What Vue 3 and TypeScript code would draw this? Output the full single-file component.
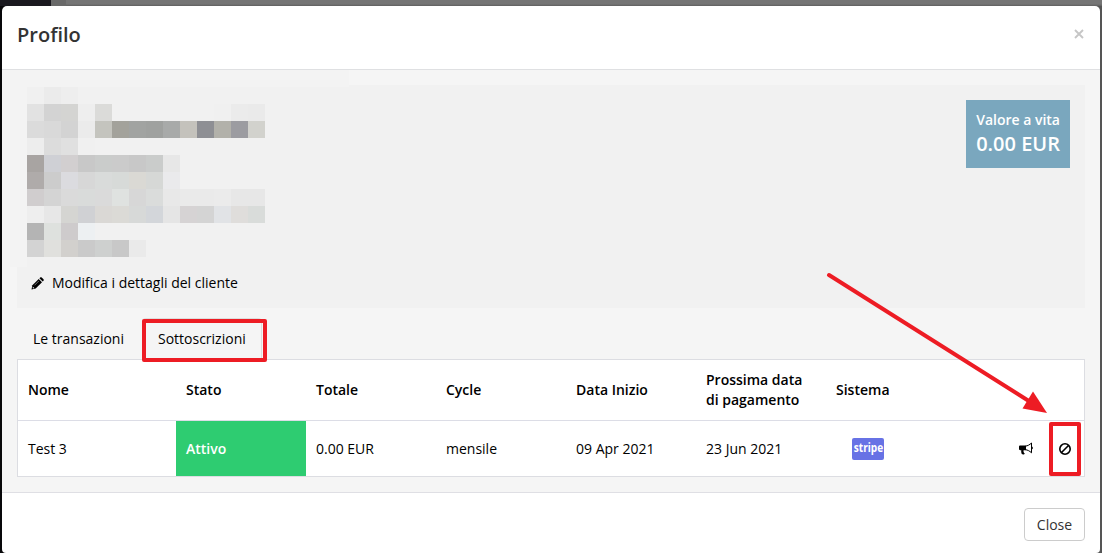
<script setup lang="ts">
import { computed, ref } from 'vue'

interface Subscription {
  name: string
  status: string
  total: string
  cycle: string
  start: string
  next: string
}

const tabs = ['Le transazioni', 'Sottoscrizioni']
const active = ref(1)

const columns = ['Nome', 'Stato', 'Totale', 'Cycle', 'Data Inizio', 'Prossima data di pagamento', 'Sistema', '']

const subscriptions: Subscription[] = [
  { name: 'Test 3', status: 'Attivo', total: '0.00 EUR', cycle: 'mensile', start: '09 Apr 2021', next: '23 Jun 2021' },
]

// pixelated customer details, one row of blocks per line, "-" is empty
const mosaic = [
  'f0f0f0 ebebeb eeeeee - - - - - - - - - - -',
  'e2e2e2 d3d3d3 d4d4d2 eeeeee dbdbd9 - - - - - - f0f0f0 ebebeb eaeaea',
  'dbdbdb d9d9d9 d3d3d3 ebebeb c4c4be a3a29b a1a3a1 9fa19f a8aaa9 c4c2bc 8e8f94 b2b1aa 9c9ca1 d2d2cd',
  'ededed dcdcdc e0e0e0 f0f0f0 - - - - - - - - - -',
  'a8a4a2 cfd0d5 d2cfd0 c8c8c8 cacccb cbcbcb c8c8c8 cacccb e7e7e7 - - - - -',
  'afabaa cccccc dbdbdf d7d7d7 d9dbda d7dad8 dad9d4 d6d8d6 eaeaec - - - - -',
  'd0cdce d4d4d4 dadada d9dbda dadada dfe2e0 d7d7d7 dadcdb e8e8e8 eaeaea eaeaea ebebeb e7e7e7 e7e7e7',
  'eeeeee e7e7e7 d5d5d2 d0d1d4 dad8d5 dbdad6 d7d9d8 d3d6da e5e5e5 d6d3d4 d4d4d4 e1e3e6 dfdddb d9dcda',
  'b4b4b4 dee1de cecbcc edf0f2 - - - - - - - - - -',
  'd3d3d3 e0e0dd d2d0cd cacaca ced0cf c8c8c8 eaeaea - - - - - - -',
]

const blocks = computed(() =>
  mosaic.flatMap(row => row.split(' ').map(c => (c === '-' ? 'transparent' : `#${c}`))),
)
</script>

<template>
  <div class="page">
    <div class="topbar">
      <span class="brand" />
      <span class="toggle" />
    </div>
    <div class="modal">
      <header class="modal-header">
        <h4>Profilo</h4>
        <button class="dismiss" aria-label="Close">
          <svg width="10" height="10" viewBox="0 0 10 10">
            <path d="M1 1l8 8M9 1l-8 8" stroke="#c6c6c6" stroke-width="1.9" />
          </svg>
        </button>
      </header>

      <main class="modal-body">
        <div class="smudge smudge-top" />
        <div class="smudge smudge-left" />
        <section class="profile">
          <div class="details">
            <div class="mosaic">
              <i v-for="(color, i) in blocks" :key="i" :style="{ background: color }" />
            </div>
            <a class="edit">
              <svg width="13" height="13" viewBox="0 0 13 13">
                <path d="M.5 12.500l.9-4.200L7.700 2l3.300 3.300-6.300 6.300z" fill="#000" />
                <path d="M8.400 1.300l.8-.8c.5-.4 1-.4 1.500 0l1.800 1.800c.4.5.4 1 0 1.500l-.8.8z" fill="#000" />
                <path d="M1.900 9.700l1.400 1.400-1.100.3-.5-.5z" fill="#f1f1f1" />
                <path d="M3.500 8.300l4.300-4.300" stroke="#999" stroke-width=".7" />
              </svg>
              <span>Modifica i dettagli del cliente</span>
            </a>
          </div>
          <div class="lifetime">
            <span>Valore a vita</span>
            <strong>0.00 EUR</strong>
          </div>
        </section>

        <nav class="tabs">
          <a v-for="(tab, i) in tabs" :key="tab" :class="{ active: i === active }" @click="active = i">{{ tab }}</a>
        </nav>

        <table>
          <colgroup>
            <col class="c-name">
            <col v-for="n in 6" :key="n" class="c-mid">
            <col>
          </colgroup>
          <thead>
            <tr>
              <th v-for="col in columns" :key="col">{{ col }}</th>
            </tr>
          </thead>
          <tbody>
            <tr v-for="sub in subscriptions" :key="sub.name">
              <td>{{ sub.name }}</td>
              <td class="status">{{ sub.status }}</td>
              <td>{{ sub.total }}</td>
              <td>{{ sub.cycle }}</td>
              <td>{{ sub.start }}</td>
              <td>{{ sub.next }}</td>
              <td><div class="stripe"><span>stripe</span></div></td>
              <td>
                <div class="actions">
                  <svg class="horn" width="14" height="14" viewBox="0 0 14 14">
                    <path d="M12.500 1v9.800c-2-1.900-4-2.900-6-3.100V4.100c2-.2 4-1.200 6-3.100z" fill="#fff" stroke="#000" stroke-width="1" />
                    <path d="M7 3.600v4.600H4.600c-.3 1.300.1 2.400 1.200 3.400-.4 1.200-2.200 1.200-3 .5-.4-1.300-.8-2.500-.5-3.900H1.300C.5 8.200 0 7.700 0 7V4.800c0-.7.500-1.200 1.300-1.200z" fill="#000" />
                    <path d="M12.500 4.600c1.800 0 1.800 2.600 0 2.600z" fill="#000" />
                  </svg>
                  <svg width="12" height="12" viewBox="0 0 12 12">
                    <circle cx="6" cy="6" r="5.200" fill="none" stroke="#000" stroke-width="1.600" />
                    <path d="M2.500 9.500l7-7" stroke="#000" stroke-width="1.600" />
                  </svg>
                </div>
              </td>
            </tr>
          </tbody>
        </table>
      </main>

      <footer class="modal-footer">
        <button class="close">Close</button>
      </footer>
    </div>

    <div class="mark mark-tab" />
    <div class="mark mark-cancel" />
    <svg class="arrow" width="226" height="146" viewBox="0 0 226 146">
      <path d="M5 5l203 128" stroke="#ed1c24" stroke-width="4" stroke-linecap="round" />
      <path d="M223 143l-14-21.500-10.500 17z" fill="#ed1c24" />
    </svg>
  </div>
</template>

<style>
body {
  margin: 0;
  overflow: hidden;
}
</style>

<style scoped>
.page {
  position: relative;
  box-sizing: border-box;
  width: 1102px;
  height: 553px;
  overflow: hidden;
  background: linear-gradient(90deg, #08080a 0 50%, #555 50%);
  color: #000;
  font: 14px/20px "Open Sans", sans-serif;
}

.topbar {
  display: flex;
  height: 6px;
  background: linear-gradient(#757575 4px, #606060);
}

.brand {
  width: 51px;
  background: #1a191f;
}

.toggle {
  width: 15px;
  background: #696969;
}

.modal {
  display: flex;
  flex-direction: column;
  height: 547px;
  margin: 0 2px;
  overflow: hidden;
  border-radius: 5px 5px 4px 4px;
  background: #fff;
}

.modal-header {
  display: flex;
  box-sizing: border-box;
  height: 64px;
  padding: 14px 16px 0 15px;
  border-bottom: 1px solid #dfe0e2;
  justify-content: space-between;
}

h4 {
  margin: 0;
  color: #333;
  font-size: 20px;
  font-weight: 600;
  line-height: 30px;
}

button {
  font-family: inherit;
}

.dismiss {
  display: flex;
  height: 10px;
  margin-top: 9px;
  padding: 0;
  border: 0;
  background: none;
}

.modal-body {
  position: relative;
  box-sizing: border-box;
  height: 423px;
  padding: 15px 15px 0;
  border-bottom: 1px solid #dfdfe4;
  background: #f5f5f5;
}

.smudge {
  position: absolute;
  background: #f3f3f3;
}

.smudge-top {
  top: 0;
  left: 8px;
  width: 339px;
  height: 17px;
}

.smudge-left {
  top: 17px;
  left: 8px;
  width: 17px;
  height: 180px;
}

.profile {
  display: flex;
  box-sizing: border-box;
  height: 223px;
  padding: 2px 15px 0 10px;
  background: #f1f1f1;
  justify-content: space-between;
}

.mosaic {
  position: relative;
  display: grid;
  grid-template-columns: repeat(14, 17px);
  grid-auto-rows: 17px;
}

.edit {
  display: flex;
  align-items: center;
  gap: 8px;
  margin: 16px 0 0 4px;
}

.lifetime {
  display: flex;
  flex-direction: column;
  box-sizing: border-box;
  height: 68px;
  margin-top: 13px;
  padding: 10px;
  background: #7aa7be;
  color: #fff;
  font-weight: 600;
}

.lifetime strong {
  font-size: 20px;
  font-weight: 600;
  line-height: 28px;
}

.tabs {
  display: flex;
  height: 41px;
  margin-top: 10px;
  gap: 2px;
}

.tabs a {
  box-sizing: border-box;
  padding: 10px 15px;
  border: 1px solid transparent;
  border-bottom: 0;
  border-radius: 4px 4px 0 0;
}

.tabs .active {
  border-color: #ddd;
}

table {
  width: 1068px;
  border: 1px solid #dcdde2;
  border-collapse: separate;
  border-spacing: 0;
  background: #fff;
  table-layout: fixed;
}

.c-name {
  width: 158px;
}

.c-mid {
  width: 130px;
}

th,
td {
  box-sizing: border-box;
  padding: 0 10px;
  text-align: left;
  vertical-align: middle;
}

th {
  height: 61px;
  border-bottom: 1px solid #dcdde6;
  font-weight: 600;
}

td {
  height: 55px;
}

.status {
  background: #2ecc71;
  color: #fff;
  font-weight: 600;
}

.stripe {
  display: flex;
  width: 32px;
  height: 22px;
  margin-left: 16px;
  border-radius: 2px;
  background: #6772e5;
  color: #fff;
  font-size: 12px;
  font-weight: 700;
  line-height: 20px;
  justify-content: center;
}

.stripe span {
  transform: scaleX(.84);
}

.actions {
  display: flex;
  align-items: center;
  justify-content: flex-end;
  gap: 26px;
  padding-right: 3px;
}

.modal-footer {
  display: flex;
  justify-content: flex-end;
  padding: 15px 15px 0;
}

.close {
  width: 61px;
  height: 33px;
  padding: 0;
  border: 1px solid #ccc;
  border-radius: 4px;
  background: #fff;
  color: #333;
  font-size: 14px;
}

/* annotations over the dialog */
.mark {
  position: absolute;
  box-sizing: border-box;
  border: 4px solid #ed1c24;
  border-radius: 2px;
}

.mark-tab {
  top: 319px;
  left: 142px;
  width: 125px;
  height: 43px;
}

.mark-cancel {
  top: 422px;
  left: 1049px;
  width: 32px;
  height: 54px;
}

.arrow {
  position: absolute;
  top: 270px;
  left: 824px;
}
</style>
